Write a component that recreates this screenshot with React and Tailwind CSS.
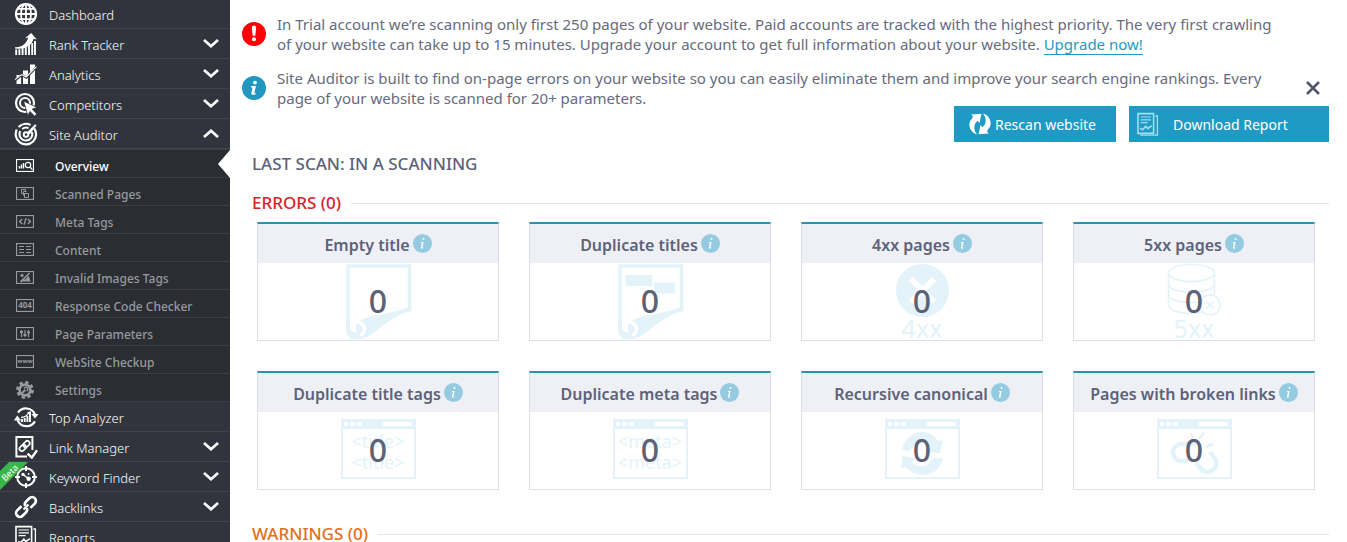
import React from 'react'

/* ---------- sidebar icons (24 x 24) ---------- */

const Icon = ({ children }) => (
  <svg viewBox="0 0 24 24" className="size-6 shrink-0" fill="none" stroke="currentColor" strokeWidth="2">
    {children}
  </svg>
)

const GlobeIcon = () => (
  <Icon>
    <circle cx="12" cy="12" r="10" strokeWidth="2.2" />
    <ellipse cx="12" cy="12" rx="5" ry="10" strokeWidth="1.8" />
    <path d="M12 2v20M2 12h20M3.6 6.8h16.8M3.6 17.2h16.8" strokeWidth="1.8" />
  </Icon>
)

const RankIcon = () => (
  <Icon>
    <path d="M2.2 23v-5.5M5.4 23v-5.8M8.6 23v-7M11.8 23v-8M15 23v-10M18.2 23v-12M21 23V9" strokeWidth="1.9" />
    <path d="M1 15.2C8 15.5 12.5 12 14.2 5.6L11 6.2 17.2 1l5.6 6.6-3.2-.8C17.8 13.6 11 18 1 16.4z" fill="currentColor" stroke="none" />
  </Icon>
)

const AnalyticsIcon = () => (
  <Icon>
    <path d="M2.5 13h4.6v9H2.5zM9 8.500h5V22H9zM16 2.500h5V22h-5z" fill="currentColor" stroke="none" />
    <path d="M1 18.400L8 13l4.400 2.600L22 5.600" stroke="#31343c" strokeWidth="2.2" />
    <path d="M1 17.600L7.600 12.600l4.600 2.400L22.400 4.600" strokeWidth="1.1" />
  </Icon>
)

const CompetitorsIcon = () => (
  <Icon>
    <circle cx="11" cy="11" r="9" strokeWidth="2.2" />
    <circle cx="11" cy="11" r="5" />
    <path d="M9.5 9l13.500 6.400-4.800 1.700 4.600 4.900-2.200 2-4.700-4.600-2 4.300z" fill="currentColor" stroke="#31343c" strokeWidth=".8" />
  </Icon>
)

const AuditorIcon = () => (
  <Icon>
    <path d="M20.2 6.3a10.2 10.2 0 1 1-17.4 1.300M4.600 5a10.200 10.200 0 0 1 12-2.100" strokeWidth="2.200" />
    <path d="M17.9 10a6.400 6.400 0 1 1-11.600-1M8.200 7a6.400 6.400 0 0 1 6.400-.9" />
    <path d="M13 10.600L21 2.200l1.600 1.400-7 9z" fill="currentColor" stroke="none" />
    <circle cx="12" cy="12.600" r="2.300" />
  </Icon>
)

const TopAnalyzerIcon = () => (
  <Icon>
    <path d="M4 7.600A9.800 9.800 0 0 1 21 9.400M21 16.400A9.800 9.800 0 0 1 3.600 15.400" strokeWidth="2.200" />
    <path d="M17.400 9h7.200L21 13.600zM0 15.400h7.200L3.200 10.600z" fill="currentColor" stroke="none" />
    <path d="M8 17v-3M10.700 17v-4M13.400 17v-6M16 17V8.600" strokeWidth="1.9" />
    <path d="M7 12.400c3 0 6-1.400 7.600-4.400" strokeWidth="1.200" />
    <path d="M13 7.200l4-1-.2 4z" fill="currentColor" stroke="none" />
  </Icon>
)

const LinkManagerIcon = () => (
  <Icon>
    <path d="M13 21.400H2.400V2h16v13" />
    <g transform="rotate(-45 10.6 11)" strokeWidth="1.700">
      <rect x="4.400" y="8.600" width="7.200" height="4.800" rx="2.400" />
      <rect x="9.600" y="8.600" width="7.200" height="4.800" rx="2.400" />
    </g>
    <path d="M13.600 18.600l4.200 4L23 15.200" strokeWidth="2.400" />
  </Icon>
)

const KeywordIcon = () => (
  <Icon>
    <circle cx="12" cy="12" r="8.800" />
    <path d="M12 1v5M12 18v5M1 12h5M18 12h5" />
    <circle cx="9" cy="9.400" r="1.700" fill="currentColor" stroke="none" />
    <circle cx="14.600" cy="13.800" r="2.200" fill="currentColor" stroke="none" />
    <path d="M9 9.400l5.400 4.200" strokeWidth="1.300" />
    <circle cx="14.600" cy="9" r=".9" fill="currentColor" stroke="none" />
  </Icon>
)

const BacklinksIcon = () => (
  <Icon>
    <g transform="rotate(-45 12 12)" strokeWidth="2.700">
      <path d="M9.500 8.200H3.400a3.800 3.800 0 0 0 0 7.600h4.800a3.800 3.800 0 0 0 3.600-2.600" />
      <path d="M14.500 15.800h6.100a3.800 3.800 0 0 0 0-7.600h-4.800a3.800 3.800 0 0 0-3.600 2.600" />
      <path d="M8.500 12h7" strokeWidth="2" />
    </g>
  </Icon>
)

const ReportsIcon = () => (
  <Icon>
    <path d="M2 1.600h15.600v19.800H2z" strokeWidth="1.600" />
    <path d="M19.400 4h2v19.200H5V22" strokeWidth="1.300" />
    <path d="M4.600 5h10.400M4.600 7.800h10.400M4.600 10.600h7" strokeWidth="1.200" />
    <path d="M4 16.400l2.600 1.400 3.200-3.600 2 2.400 4-3" strokeWidth="1.600" />
  </Icon>
)

/* ---------- submenu icons (18 x 13 framed) ---------- */

const Framed = ({ children }) => (
  <svg viewBox="0 0 18 13" className="h-[13px] w-[18px] shrink-0" fill="none" stroke="currentColor" strokeWidth="1">
    <rect x=".5" y=".5" width="17" height="12" strokeWidth="1.200" />
    {children}
  </svg>
)

const OverviewIcon = () => (
  <Framed>
    <path d="M3.500 9.500V7M5.500 9.500V5.500M7.500 9.500V4" strokeWidth="1.400" />
    <circle cx="12" cy="6" r="2.700" strokeWidth="1.200" />
    <path d="M14 8l2.400 2.600" strokeWidth="1.300" />
  </Framed>
)

const PagesIcon = () => (
  <Framed>
    <path d="M9 6.500H5.500v-4h4v2M7.500 8.500v-4h3" />
    <path d="M8.500 6.500h4v4h-4z" />
  </Framed>
)

const MetaIcon = () => (
  <Framed>
    <path d="M6.200 4L3.600 6.500 6.200 9M11.800 4l2.600 2.500L11.800 9M10 3.200L8 9.800" strokeWidth="1.400" />
  </Framed>
)

const ContentIcon = () => (
  <Framed>
    <path d="M3 3.500h5M10 3.500h5M3 6.500h5M10 6.500h5M3 9.500h5M10 9.500h5" />
  </Framed>
)

const ImagesIcon = () => (
  <Framed>
    <path d="M4 10.600l3-3.200 2 1.400 3.600-4.200 2 6z" fill="currentColor" stroke="none" />
    <circle cx="6" cy="4.400" r="1.600" fill="currentColor" stroke="none" />
    <path d="M4.400 11L13.600 2" strokeWidth="1.600" />
  </Framed>
)

const CodeIcon = () => (
  <Framed>
    <text x="9" y="9.400" textAnchor="middle" fill="currentColor" stroke="none" className="text-[8px] font-bold">404</text>
  </Framed>
)

const ParamsIcon = () => (
  <Framed>
    <path d="M5.500 3v7M9 3v7M12.500 3v7" strokeWidth="1.200" />
    <path d="M4 5h3M7.500 8h3M11 5.400h3" strokeWidth="1.800" />
  </Framed>
)

const WwwIcon = () => (
  <Framed>
    <text x="9" y="8.200" textAnchor="middle" fill="currentColor" stroke="none" className="text-[6px] font-bold">www</text>
  </Framed>
)

const SettingsIcon = () => (
  <svg viewBox="0 0 20 20" className="size-[18px] shrink-0" fill="none" stroke="currentColor">
    <circle cx="10" cy="10" r="8.200" strokeWidth="3.400" strokeDasharray="3.600 2.840" />
    <circle cx="10" cy="10" r="6" strokeWidth="3" />
    <path d="M6.400 13.800l4-4" strokeWidth="2.200" />
    <path d="M9 8.200a2.200 2.200 0 1 1 2.800 3" strokeWidth="1.600" />
  </svg>
)

const Chevron = ({ up }) => (
  <svg viewBox="0 0 16 9" className="ml-auto h-[9px] w-4" fill="none" stroke="currentColor" strokeWidth="2.700">
    <path d={up ? 'M1 8l7-6.200L15 8' : 'M1 1l7 6.200L15 1'} />
  </svg>
)

const topMenu = [
  { name: 'Dashboard', icon: GlobeIcon },
  { name: 'Rank Tracker', icon: RankIcon, arrow: true },
  { name: 'Analytics', icon: AnalyticsIcon, arrow: true },
  { name: 'Competitors', icon: CompetitorsIcon, arrow: true },
  { name: 'Site Auditor', icon: AuditorIcon, arrow: true, open: true },
]

const subMenu = [
  { name: 'Overview', icon: OverviewIcon, active: true },
  { name: 'Scanned Pages', icon: PagesIcon },
  { name: 'Meta Tags', icon: MetaIcon },
  { name: 'Content', icon: ContentIcon },
  { name: 'Invalid Images Tags', icon: ImagesIcon },
  { name: 'Response Code Checker', icon: CodeIcon },
  { name: 'Page Parameters', icon: ParamsIcon },
  { name: 'WebSite Checkup', icon: WwwIcon },
  { name: 'Settings', icon: SettingsIcon },
]

const bottomMenu = [
  { name: 'Top Analyzer', icon: TopAnalyzerIcon },
  { name: 'Link Manager', icon: LinkManagerIcon, arrow: true },
  { name: 'Keyword Finder', icon: KeywordIcon, arrow: true, beta: true },
  { name: 'Backlinks', icon: BacklinksIcon, arrow: true },
  { name: 'Reports', icon: ReportsIcon },
]

const MenuItem = ({ item }) => {
  const ItemIcon = item.icon
  return (
    <li>
      <a href="#" className="relative flex h-[30px] items-center border-b border-[#41444c] pr-[11px] pl-[14px] text-white">
        <ItemIcon />
        <span className="ml-[11px] pt-[2px] text-[13px] leading-5 font-light">{item.name}</span>
        {item.arrow && <Chevron up={item.open} />}
        {item.beta && (
          <svg viewBox="0 0 30 30" className="absolute top-0 left-0 size-[30px]">
            <path d="M9 0h19L0 28V9z" fill="#39b54a" />
            <text x="12" y="13" textAnchor="middle" transform="rotate(-45 12 13)" fill="#fff" className="text-[9px]">Beta</text>
          </svg>
        )}
      </a>
    </li>
  )
}

const Sidebar = () => (
  <nav className="w-[230px] shrink-0 bg-[#31343c]">
    <ul className="-mt-px">
      {topMenu.map((item) => <MenuItem key={item.name} item={item} />)}
    </ul>
    <ul className="border-t border-[#3a3d44] bg-[#2a2d32]">
      {subMenu.map(({ name, icon: SubIcon, active }) => (
        <li key={name}>
          <a
            href="#"
            className={`relative flex h-7 items-center border-b border-[#3a3d44] pt-1 pl-4 ${active ? 'text-white' : 'text-[#989a9e]'}`}
          >
            <SubIcon />
            <span className="ml-[21px] pt-[2px] text-[12px] leading-5 font-medium">{name}</span>
            {active && (
              <svg viewBox="0 0 12 28" className="absolute top-0 right-0 h-7 w-3">
                <path d="M12 0L0 14l12 14z" fill="#fff" />
              </svg>
            )}
          </a>
        </li>
      ))}
    </ul>
    <ul>
      {bottomMenu.map((item) => <MenuItem key={item.name} item={item} />)}
    </ul>
  </nav>
)

/* ---------- pale drawings behind the counters ---------- */

const Art = ({ children }) => (
  <svg viewBox="0 0 76 77" className="h-[77px] w-[76px] [grid-area:1/1]" fill="none" stroke="#e3f3f9" strokeWidth="2">
    {children}
  </svg>
)

const PaperArt = ({ blocks }) => (
  <Art>
    <path d="M8 67V3h61.500v43" strokeWidth="3.600" />
    <path d="M71.300 42C58 51 36 50 23 56c-7 3-9 10-6 14-5-1-8-4-7-10H6.200v7C6.200 73 10 76.500 17 76.500c17 0 27-22 54.300-28.500z" fill="#e3f3f9" stroke="none" />
    <path d="M13 64c0-5 7-6 10-2s1 9-3 10" stroke="#fff" strokeWidth="3" />
    {blocks && <path d="M13.500 12h27v11h-27zM42 19.500h21v11H42z" fill="#e3f3f9" stroke="none" />}
  </Art>
)

const Code4Art = () => (
  <Art>
    <circle cx="38.500" cy="27.500" r="26.500" fill="#e3f3f9" stroke="none" />
    <path d="M27 16l23 23M50 16L27 39" stroke="#fff" strokeWidth="6" />
    <text x="38" y="75" textAnchor="middle" fill="#e3f3f9" stroke="none" className="text-[25px]">4xx</text>
  </Art>
)

const Code5Art = () => (
  <Art>
    <ellipse cx="35.500" cy="10" rx="23" ry="8.500" strokeWidth="1.600" />
    <path d="M12.500 10v32c0 5 10 8.500 23 8.500 3.500 0 7-.3 10-1M58.500 10v22" strokeWidth="1.600" />
    <path d="M12.500 21c0 5 10 8 23 8s23-3 23-8M12.500 31.500c0 5 10 8 23 8 3.500 0 6-.2 9-.8" strokeWidth="1.600" />
    <circle cx="54" cy="42" r="10" strokeWidth="1.600" />
    <path d="M50.500 38.500l7 7M57.500 38.500l-7 7" strokeWidth="1.600" />
    <text x="38" y="75" textAnchor="middle" fill="#e3f3f9" stroke="none" className="text-[25px]">5xx</text>
  </Art>
)

const WindowArt = ({ children }) => (
  <Art>
    <path d="M2 8h73v58H2z" />
    <path d="M1 7h75v10H1z" fill="#e3f3f9" stroke="none" />
    <path d="M4 10h4v4H4zM11 10h4v4h-4zM18 10h4v4h-4zM43 10h29v4H43z" fill="#fff" stroke="none" />
    {children}
  </Art>
)

const TagArt = ({ tag }) => (
  <WindowArt>
    <g fill="#e3f3f9" stroke="none" className="text-[18px]">
      <text x="38" y="36" textAnchor="middle">{tag}</text>
      <text x="38" y="57" textAnchor="middle">{tag}</text>
    </g>
  </WindowArt>
)

const CanonicalArt = () => (
  <WindowArt>
    <path d="M18 38C21 26 29 20 38 20c7 0 12 3 16 9l5-1-3 13-15-1 5-5c-4-5-13-5-17 0-2 2-3 3-4 4z" fill="#e3f3f9" stroke="none" />
    <path d="M59 46C56 58 48 63 39 63c-7 0-13-3-17-8l-5 2 1-13 14 2-4 4c4 5 12 6 17 1 2-2 3-3 4-5z" fill="#e3f3f9" stroke="none" />
  </WindowArt>
)

const BrokenArt = () => (
  <WindowArt>
    <path d="M40 32H26a9 8.500 0 0 0 0 17h6" strokeWidth="4.500" />
    <path d="M54 40l6 8a9 9 0 0 1-14 10l-6-7" strokeWidth="4.500" />
    <path d="M37 27l-2-6M43 27l5-6M50 35l7-3" strokeWidth="2.500" />
  </WindowArt>
)

const errorCards = [
  { title: 'Empty title', count: 0, art: <PaperArt /> },
  { title: 'Duplicate titles', count: 0, art: <PaperArt blocks /> },
  { title: '4xx pages', count: 0, art: <Code4Art /> },
  { title: '5xx pages', count: 0, art: <Code5Art /> },
  { title: 'Duplicate title tags', count: 0, art: <TagArt tag="<title>" /> },
  { title: 'Duplicate meta tags', count: 0, art: <TagArt tag="<meta>" /> },
  { title: 'Recursive canonical', count: 0, art: <CanonicalArt /> },
  { title: 'Pages with broken links', count: 0, art: <BrokenArt /> },
]

const Card = ({ title, count, art }) => (
  <article className="border border-t-2 border-[#dcdfe4] border-t-[#2a93b5]">
    <header className="flex h-[39px] items-center justify-center bg-[#eff0f6]">
      <h3 className="pt-[2px] text-[16px] leading-5 font-semibold text-[#5c6279]">{title}</h3>
      <button type="button" aria-label={`About ${title}`} className="ml-[3px]">
        <svg viewBox="0 0 24 24" className="size-[19px]">
          <circle cx="12" cy="12" r="12" fill="#94cbe1" />
          <path d="M13.300 5.200a1.200 1.200 0 1 1 0 2.400 1.200 1.200 0 0 1 0-2.400zM10 10h3.400l-1.500 7c0 .6.600.5 1.300.1l-.2.800c-1.400 1-3.300.8-2.900-.8l1.100-5.300c.1-.7-.4-.8-1.300-.9z" fill="#fff" />
        </svg>
      </button>
    </header>
    <div className="grid place-items-center">
      {art}
      <span className="z-10 pb-[2px] text-[32px] leading-8 font-medium text-[#5c6279] [grid-area:1/1]">{count}</span>
    </div>
  </article>
)

const SectionTitle = ({ children, className }) => (
  <div className="flex items-center gap-[10px]">
    <h2 className={`text-[17px] leading-6 font-medium ${className}`}>{children}</h2>
    <span className="h-px flex-1 bg-[#e4e5e7]" />
  </div>
)

export default function App() {
  return (
    <div className='flex h-screen overflow-hidden bg-white font-["Noto_Sans","Open_Sans",sans-serif]'>
      <Sidebar />

      <main className="min-w-0 flex-1 pt-[14px] pr-[18px] pl-[22px]">
        <section className="-ml-[10px] text-[15px] leading-5 text-[#666b7d]">
          <div className="flex items-center gap-[11px] pr-[49px]">
            <svg viewBox="0 0 24 24" className="size-6 shrink-0">
              <circle cx="12" cy="12" r="12" fill="#fd0008" />
              <path d="M9.800 5.800a2.200 2.200 0 0 1 4.400 0l-.9 8h-2.600z" fill="#fff" />
              <circle cx="12" cy="17.300" r="2" fill="#fff" />
            </svg>
            <p className="flex-1">
              In Trial account we’re scanning only first 250 pages of your website. Paid accounts are tracked with the
              highest priority. The very first crawling of your website can take up to 15 minutes. Upgrade your account
              to get full information about your website.{' '}
              <a href="#" className="border-b border-[#1f9ac3] text-[#1f9ac3]">Upgrade now!</a>
            </p>
          </div>
          <div className="mt-[14px] flex items-center gap-[11px]">
            <svg viewBox="0 0 24 24" className="size-6 shrink-0">
              <circle cx="12" cy="12" r="12" fill="#2196c0" />
              <circle cx="13" cy="6.600" r="1.900" fill="#fff" />
              <path d="M9 10h4.900l-1.500 6.800c-.1.700.7.700 1.700.2l-.2 1.100c-1.700 1.200-5 1.200-4.500-1.100l1-4.800c.1-.7-.4-.9-1.400-.9z" fill="#fff" />
            </svg>
            <p className="flex-1">
              Site Auditor is built to find on-page errors on your website so you can easily eliminate them and improve
              your search engine rankings. Every page of your website is scanned for 20+ parameters.
            </p>
            <button type="button" aria-label="Close" className="mr-[9px] ml-[15px] text-[#50566b]">
              <svg viewBox="0 0 14 14" className="size-[14px]" stroke="currentColor" strokeWidth="2.600">
                <path d="M1 1l12 12M13 1L1 13" />
              </svg>
            </button>
          </div>
        </section>

        <div className="-mt-[2px] flex justify-end gap-[13px] text-[14px] text-white">
          <button type="button" className="flex h-9 w-[162px] items-center bg-[#1f9ac4] pl-[15px]">
            <svg viewBox="0 0 22 22" className="size-[22px]" fill="currentColor">
              <path d="M8 21.500C1.500 20-1.500 12 1.500 7.500L4 4 2.500 1.500l10-.7-2 9.200-2.200-2.200L6.500 10C4.500 13.500 5 18 8 21.500z" />
              <path d="M14 .5c6.500 1.500 9.500 9.500 6.500 14L18 18l1.500 2.500-10 .7 2-9.200 2.200 2.200L15.500 12C17.500 8.500 17 4 14 .5z" />
            </svg>
            <span className="ml-[4px]">Rescan website</span>
          </button>
          <button type="button" className="flex h-9 w-[200px] items-center bg-[#1f9ac4] pl-[7px]">
            <span className="text-[#a5dcf0]"><ReportsIcon /></span>
            <span className="ml-[13px]">Download Report</span>
          </button>
        </div>

        <h2 className="mt-[10px] mb-[15px] text-[17px] leading-6 font-medium text-[#5c6279]">LAST SCAN: IN A SCANNING</h2>

        <SectionTitle className="text-[#d8232a]">ERRORS (0)</SectionTitle>
        <div className="mt-[7px] mb-8 grid grid-cols-4 gap-[30px] pr-[14px] pl-[5px]">
          {errorCards.map((card) => <Card key={card.title} {...card} />)}
        </div>

        <SectionTitle className="text-[#e0701e]">WARNINGS (0)</SectionTitle>
      </main>
    </div>
  )
}
